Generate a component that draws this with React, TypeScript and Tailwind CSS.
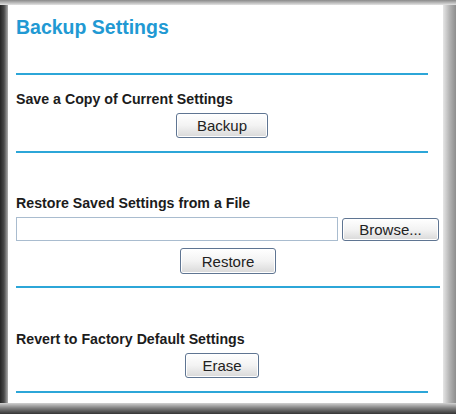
import React from "react"

const Btn = ({ label, className }: { label: string; className: string }) => (
  <button
    className={`border border-[#5f7592] rounded-[3px] bg-gradient-to-b from-white via-[#f3f3f3] to-[#d9d9d9] text-[15px] leading-none text-[#222] shadow-[inset_0_0_0_1px_#ffffff] ${className}`}
  >
    {label}
  </button>
)

const App = () => {
  return (
    <div className="w-[456px] h-[414px] flex flex-col bg-white font-['Liberation_Sans',Arial,sans-serif] text-[#1c1c1c]">
      <div className="h-[5px] bg-gradient-to-b from-[#8a8a8a] to-[#e4e4e4]" />
      <div className="flex flex-1">
        <div className="w-[8px] bg-gradient-to-r from-[#262626] via-[#4a4a4a] to-[#b0b0b0]" />
        <div className="flex-1 flex flex-col pl-[8px]">
          <h1 className="mt-[11px] h-[22px] leading-[22px] text-[19.5px] font-bold text-[#2199d3]">
            Backup Settings
          </h1>
          <div className="mt-[35px] h-[2px] w-[412px] bg-[#2ca6d8]" />

          <div className="w-[412px] flex flex-col">
            <p className="mt-[16px] leading-[16px] text-[14.2px] font-bold">Save a Copy of Current Settings</p>
            <Btn label="Backup" className="mt-[6px] self-center w-[92px] h-[25px]" />
          </div>
          <div className="mt-[13px] h-[2px] w-[412px] bg-[#2ca6d8]" />

          <div className="w-[424px] flex flex-col">
            <p className="mt-[42px] leading-[16px] text-[14.2px] font-bold">Restore Saved Settings from a File</p>
            <div className="mt-[6px] flex items-center gap-[4px]">
              <input className="w-[322px] h-[24px] border border-[#a9bccf] bg-white outline-none" />
              <Btn label="Browse..." className="w-[97px] h-[23px]" />
            </div>
            <Btn label="Restore" className="mt-[7px] self-center w-[96px] h-[26px]" />
          </div>
          <div className="mt-[12px] h-[2px] w-[424px] bg-[#2ca6d8]" />

          <div className="w-[412px] flex flex-col">
            <p className="mt-[43px] leading-[16px] text-[14.2px] font-bold">Revert to Factory Default Settings</p>
            <Btn label="Erase" className="mt-[6px] self-center w-[74px] h-[25px]" />
          </div>
          <div className="mt-[13px] h-[2px] w-[412px] bg-[#2ca6d8]" />
        </div>
        <div className="w-[13px] bg-gradient-to-r from-[#e6e6e6] via-[#b4b4b4] to-[#8e8e8e]" />
      </div>
      <div className="h-[11px] bg-gradient-to-b from-[#d2d2d2] via-[#7a7a7a] to-[#353535]" />
    </div>
  )
}

export default App
